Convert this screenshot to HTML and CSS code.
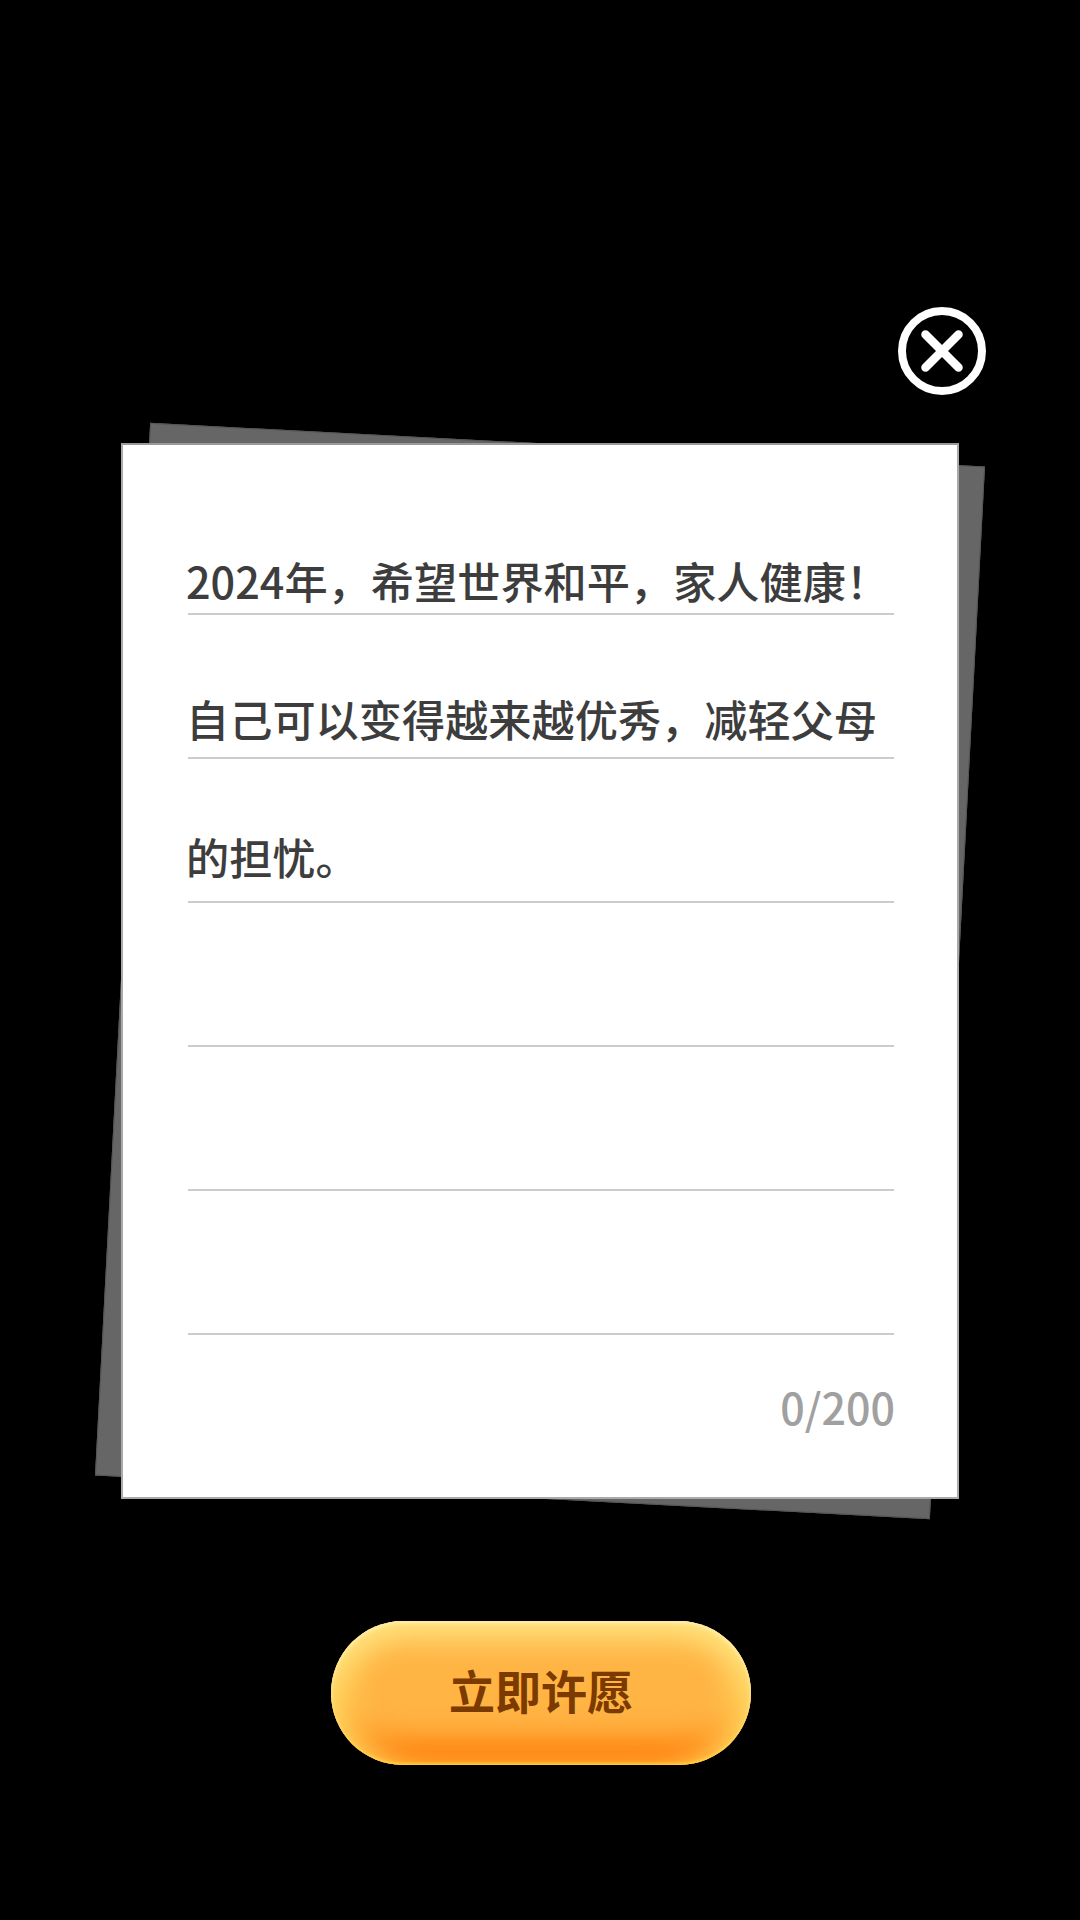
FILE: index.html
```html
<!DOCTYPE html>
<html lang="zh-CN">
<head>
<meta charset="utf-8">
<title>立即许愿</title>
<link rel="stylesheet" href="styles.css">
</head>
<body>
<main class="page">
  <div class="close-row">
    <svg class="close-icon" viewBox="0 0 88 88" aria-label="关闭">
      <circle cx="44" cy="44" r="40" fill="none" stroke="#fff" stroke-width="8"/>
      <path d="M27.5 27.5 L60.5 60.5 M60.5 27.5 L27.5 60.5" fill="none" stroke="#fff" stroke-width="8.5" stroke-linecap="round"/>
    </svg>
  </div>
  <section class="sheet">
    <div class="sheet-back"></div>
    <div class="sheet-front">
      <div class="writing">
        <div class="rules">
          <span class="rule"></span>
          <span class="rule"></span>
          <span class="rule"></span>
          <span class="rule"></span>
          <span class="rule"></span>
          <span class="rule"></span>
        </div>
        <div class="text">
          <p class="line">2024年，希望世界和平，家人健康！</p>
          <p class="line">自己可以变得越来越优秀，减轻父母</p>
          <p class="line">的担忧。</p>
        </div>
      </div>
      <div class="count">0/200</div>
    </div>
  </section>
  <button class="wish"><span class="wish-label">立即许愿</span></button>
</main>
</body>
</html>
```
FILE: styles.css
```css
* { box-sizing: border-box; }
html, body { margin: 0; padding: 0; background: #000; }
body { width: 1080px; height: 1920px; overflow: hidden; }
.page {
  display: flex;
  flex-direction: column;
  align-items: center;
  padding-top: 307px;
  font-family: "Noto Sans CJK SC", "Noto Sans", sans-serif;
}
.close-row {
  width: 100%;
  height: 88px;
  display: flex;
  justify-content: flex-end;
  padding-right: 94px;
}
.close-icon { width: 88px; height: 88px; display: block; }
.sheet {
  position: relative;
  width: 838px;
  height: 1056px;
  margin-top: 48px;
}
.sheet-back {
  position: absolute;
  inset: 1px;
  background: #666;
  border: 1px solid #555;
  transform: rotate(3deg);
}
.sheet-front {
  position: relative;
  height: 100%;
  background: #fff;
  border: 2px solid #aaa;
  border-top-color: #999;
  padding: 26px 63px 0 65px;
  display: flex;
  flex-direction: column;
}
.writing { display: grid; flex: none; }
.rules, .text { grid-area: 1 / 1; }
.rules { display: flex; flex-direction: column; }
.rule {
  display: block;
  height: 144px;
  border-bottom: 2px solid #ccc;
}
.text { margin-top: 39.5px; margin-left: -2px; }
.line {
  margin: 0;
  height: 138.4px;
  font-size: 43.2px;
  font-weight: 500;
  line-height: 138.4px;
  color: #3d3d3d;
  white-space: nowrap;
}
.count {
  margin-top: 41px;
  margin-right: -1px;
  text-align: right;
  font-size: 43px;
  font-weight: 500;
  line-height: 60px;
  color: #a0a0a0;
}
.wish {
  width: 420px;
  height: 144px;
  margin-top: 122px;
  margin-left: 2px;
  border: 0;
  padding: 0 0 8px;
  border-radius: 72px;
  background: #ffb444;
  box-shadow:
    inset 0 3px 5px -1px #fff3b8,
    inset 0 30px 30px -12px #ffe27e,
    inset 30px 0 32px -12px #ffd55f,
    inset -30px 0 32px -12px #ffd55f,
    inset 0 -3px 3px -1px #ffc81c,
    inset 0 -42px 30px -18px #ff7a08;
  font-family: inherit;
  font-size: 46px;
  font-weight: 700;
  line-height: 60px;
  color: #7a3a00;
}
.wish-label { display: block; }
```
